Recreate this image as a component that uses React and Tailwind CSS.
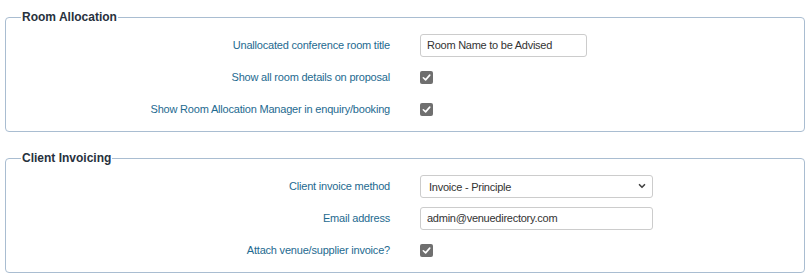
import { ChevronDown } from "lucide-react"

function Check() {
  return (
    <span className="inline-flex h-[13px] w-[13px] items-center justify-center rounded-[2px] bg-[#6f6f6f]">
      <svg width="9" height="9" viewBox="0 0 10 10" fill="none">
        <path d="M1.5 5.3 L4 7.6 L8.6 2.4" stroke="white" strokeWidth="1.8" strokeLinecap="round" strokeLinejoin="round" />
      </svg>
    </span>
  )
}

function Row({ label, children }) {
  return (
    <div className="flex h-8 items-center">
      <label className="w-[384px] text-right text-[11px] tracking-[-0.2px] text-[#1e6a90]">{label}</label>
      <div className="ml-[30px] flex items-center">{children}</div>
    </div>
  )
}

function Section({ title, children, className }) {
  return (
    <fieldset className={"ml-[5px] w-[800px] rounded-[4px] border border-[#a9bdd1] pb-[6px] pt-[3px] " + className}>
      <legend className="ml-[15px] px-[1px] text-[12px] font-bold leading-[18px] text-[#27313d]">{title}</legend>
      {children}
    </fieldset>
  )
}

export default function App() {
  return (
    <div className="min-h-screen bg-white font-['Liberation_Sans',Arial,sans-serif]">
      <div className="pt-[8px]">
        <Section title="Room Allocation">
          <Row label="Unallocated conference room title">
            <input
              type="text"
              defaultValue="Room Name to be Advised"
              className="h-[23px] w-[167px] rounded-[3px] border border-[#cccccc] px-[6px] text-[11px] tracking-[-0.25px] text-[#333] outline-none"
            />
          </Row>
          <Row label="Show all room details on proposal">
            <Check />
          </Row>
          <Row label="Show Room Allocation Manager in enquiry/booking">
            <Check />
          </Row>
        </Section>

        <Section title="Client Invoicing" className="mt-[17px]">
          <Row label="Client invoice method">
            <div className="relative">
              <select
                defaultValue="principle"
                className="h-[23px] w-[233px] appearance-none rounded-[3px] border border-[#cccccc] bg-white pl-[8px] text-[11px] tracking-[-0.25px] text-[#333] outline-none"
              >
                <option value="principle">Invoice - Principle</option>
                <option value="agent">Invoice - Agent</option>
              </select>
              <ChevronDown className="pointer-events-none absolute right-[6px] top-[7px] h-[10px] w-[10px] text-[#444]" strokeWidth={4} />
            </div>
          </Row>
          <Row label="Email address">
            <input
              type="text"
              defaultValue="admin@venuedirectory.com"
              className="h-[23px] w-[233px] rounded-[3px] border border-[#cccccc] px-[6px] text-[11px] tracking-[-0.25px] text-[#333] outline-none"
            />
          </Row>
          <Row label="Attach venue/supplier invoice?">
            <Check />
          </Row>
        </Section>
      </div>
    </div>
  )
}
